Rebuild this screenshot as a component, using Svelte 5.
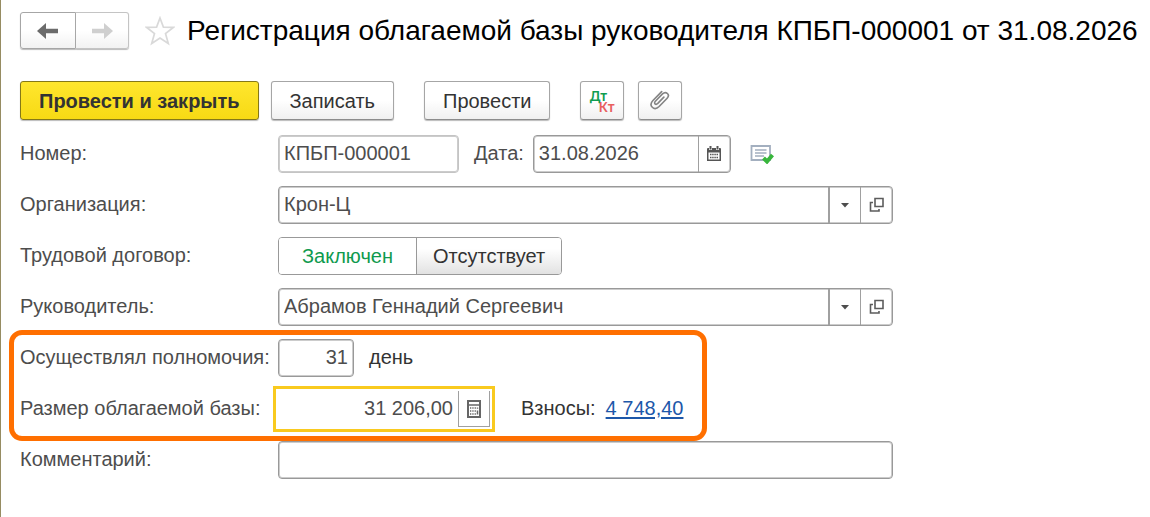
<script lang="ts">
  let number = $state('КПБП-000001');
  let date = $state('31.08.2026');
  let organization = $state('Крон-Ц');
  let contract = $state('yes');
  let manager = $state('Абрамов Геннадий Сергеевич');
  let days = $state('31');
  let base = $state('31 206,00');
  let comment = $state('');
</script>

{#snippet choose()}
  <button type="button" class="cell arrow" aria-label="Выбрать из списка">
    <svg width="10" height="6" viewBox="0 0 10 6"><path d="M1 1h8L5 5.5z" fill="#4d4d4d" /></svg>
  </button>
  <button type="button" class="cell" aria-label="Открыть">
    <svg width="16" height="16" viewBox="0 0 16 16" fill="none" stroke="#5c5c5c" stroke-width="1.6">
      <path d="M6 1.500h8v8H6zM4 5.500H1.500v8.500H10v-2" />
    </svg>
  </button>
{/snippet}

<main>
  <header>
    <nav>
      <button type="button" aria-label="Назад">
        <svg width="22" height="16" viewBox="0 0 22 16"><path d="M0 8l9-8v5.700h12v4.600H9V16z" fill="#6b6b6b" /></svg>
      </button>
      <button type="button" class="off" aria-label="Вперед">
        <svg width="22" height="16" viewBox="0 0 22 16"><path d="M22 8l-9-8v5.700H1v4.600h12V16z" fill="#cfcfcf" /></svg>
      </button>
    </nav>
    <button type="button" class="star" aria-label="В избранное">
      <svg width="30" height="30" viewBox="0 0 30 30">
        <path d="M15 2l3.400 9.100 9.900.3-7.800 6.100 2.800 10L15 22l-8.300 5.500 2.800-10-7.800-6.100 9.900-.3z" fill="none" stroke="#d9d9d9" stroke-width="1.700" />
      </svg>
    </button>
    <h1>Регистрация облагаемой базы руководителя КПБП-000001 от 31.08.2026</h1>
  </header>

  <div class="toolbar">
    <button type="button" class="btn primary">Провести и закрыть</button>
    <button type="button" class="btn save">Записать</button>
    <button type="button" class="btn post">Провести</button>
    <button type="button" class="btn icon postings" aria-label="Проводки"><span class="dt">Дт</span><span class="kt">Кт</span></button>
    <button type="button" class="btn icon" aria-label="Файлы">
      <svg width="22" height="22" viewBox="0 0 20 20" fill="none" stroke="#858585" stroke-width="1.500" stroke-linecap="round">
        <path d="M13.500 6.500l-5.500 5.700c-2 1.900-4-.2-2.200-2l6.500-6.700c3.200-3 7.200.8 4.200 4l-7.300 7.500c-4.600 4.500-10-.8-5.600-5.500L11.500 1.500" />
      </svg>
    </button>
  </div>

  <form>
    <div class="row">
      <label for="number">Номер:</label>
      <div class="field pale number"><input id="number" bind:value={number} /></div>
      <label for="date" class="inner">Дата:</label>
      <div class="field date">
        <input id="date" bind:value={date} />
        <button type="button" class="cell" aria-label="Календарь">
          <svg width="16" height="16" viewBox="0 0 16 16">
            <path d="M1 3q0-1 1-1h12q1 0 1 1v12H1z" fill="#555" />
            <path d="M2.500 6.500h11v7h-11z" fill="#fff" />
            <path d="M4.500 0v4M11.500 0v4" stroke="#fff" stroke-width="3" />
            <path d="M4.500 0v3.500M11.500 0v3.500" stroke="#555" stroke-width="2" />
            <path d="M4 8.500h8M4 11.500h8" stroke="#555" stroke-width="1.500" stroke-dasharray="1.500 .67" />
          </svg>
        </button>
      </div>
      <button type="button" class="status" aria-label="Документ проведен">
        <svg width="24" height="20" viewBox="0 0 24 20">
          <path d="M1.500 2h18.500v14H1.500z" fill="#fff" stroke="#a3afbf" stroke-width="1.800" />
          <path d="M5 6h11.500M5 9h11.500M5 12h9" stroke="#a3afbf" stroke-width="1.500" />
          <path d="M13.500 14l3.500 3.500 5.500-6.500" fill="none" stroke="#38b63c" stroke-width="4" />
        </svg>
      </button>
    </div>

    <div class="row">
      <label for="organization">Организация:</label>
      <div class="field wide"><input id="organization" bind:value={organization} />{@render choose()}</div>
    </div>

    <div class="row" role="radiogroup" aria-labelledby="contract">
      <span class="caption" id="contract">Трудовой договор:</span>
      <div class="switch">
        <label><input type="radio" name="contract" value="yes" bind:group={contract} /><span>Заключен</span></label>
        <label><input type="radio" name="contract" value="no" bind:group={contract} /><span>Отсутствует</span></label>
      </div>
    </div>

    <div class="row">
      <label for="manager">Руководитель:</label>
      <div class="field wide"><input id="manager" bind:value={manager} />{@render choose()}</div>
    </div>

    <section>
      <div class="row">
        <label for="days">Осуществлял полномочия:</label>
        <div class="field days"><input id="days" bind:value={days} /></div>
        <span class="unit">день</span>
      </div>
      <div class="row">
        <label for="base">Размер облагаемой базы:</label>
        <div class="field base">
          <input id="base" bind:value={base} />
          <button type="button" class="cell" aria-label="Калькулятор">
            <svg width="16" height="18" viewBox="0 0 16 18">
              <path d="M2 1h12v16H2z" fill="#fff" stroke="#666" stroke-width="2" />
              <path d="M2 5h12" stroke="#666" stroke-width="1.500" />
              <path d="M4 8h6M4 11h6M4 14h6" stroke="#666" stroke-width="1.300" stroke-dasharray="1.300 1" />
              <path d="M11.500 7.500v1.300M11.500 10.500v4" stroke="#666" stroke-width="1.500" />
            </svg>
          </button>
        </div>
        <span class="fees">Взносы:</span>
        <a href="#fees">4 748,40</a>
      </div>
    </section>

    <div class="row">
      <label for="comment">Комментарий:</label>
      <div class="field wide"><input id="comment" bind:value={comment} /></div>
    </div>
  </form>
</main>

<style>
  :global(body) { margin: 0; background: #fff; }
  main {
    box-sizing: border-box;
    min-height: 100vh;
    padding: 12px 12px 24px 19px;
    border-left: 1px solid #968c62;
    font: 20px/24px "Liberation Sans", Arial, sans-serif;
    color: #4d4d4d;
  }
  button, input { font: inherit; color: inherit; }
  button { box-sizing: border-box; padding: 0; cursor: pointer; }
  svg { display: block; flex: none; }

  header { display: flex; align-items: center; }
  nav { display: flex; }
  nav button {
    display: flex;
    align-items: center;
    justify-content: center;
    width: 56px;
    height: 37px;
    border: 1px solid #a6a6a6;
    border-radius: 3px 0 0 3px;
    background: linear-gradient(#fff 50%, #f2f2f2);
    box-shadow: 0 1px 1px #bbb;
  }
  nav .off { width: 53px; border-color: #c4c4c4; border-left: 0; border-radius: 0 3px 3px 0; }
  .star { margin-left: 16px; border: 0; background: none; }
  h1 { margin: 0 0 0 12px; font-size: 28px; line-height: 36px; font-weight: 400; color: #000; white-space: nowrap; }

  .toolbar { display: flex; margin-top: 32px; }
  .btn {
    display: flex;
    align-items: center;
    justify-content: center;
    height: 39px;
    padding: 0 18px;
    border: 1px solid #a6a6a6;
    border-bottom-color: #8c8c8c;
    border-radius: 3px;
    background: linear-gradient(#fff 50%, #f0f0f0);
    box-shadow: 0 1px 1px #bbb;
    color: #333;
    white-space: nowrap;
  }
  .primary { border-color: #857817; background: linear-gradient(#ffe62e, #f7da14); font-weight: 700; }
  .save { margin-left: 12px; }
  .post { margin: 0 30px; }
  .icon { width: 44px; padding: 0; }
  .icon + .icon { margin-left: 14px; }
  .postings { flex-direction: column; font: 600 14px/11px "Noto Sans", sans-serif; }
  .dt { margin-right: 8px; color: #0f9d50; }
  .kt { margin-left: 8px; color: #e8605f; }

  form { margin-top: 15px; }
  .row { display: flex; align-items: center; height: 38px; margin-bottom: 13px; }
  .row > label:first-child, .caption { flex: none; width: 258px; padding-bottom: 2px; box-sizing: border-box; white-space: nowrap; }
  .field {
    display: flex;
    box-sizing: border-box;
    height: 38px;
    border: 1px solid #999;
    border-radius: 4px;
    background: #fff;
    box-shadow: inset 0 0 0 1px #ccc;
    overflow: hidden;
  }
  .field input { flex: 1; min-width: 0; padding: 0 5px 2px; border: 0; outline: 0; background: none; }
  .cell {
    display: flex;
    align-items: center;
    justify-content: center;
    flex: none;
    width: 32px;
    border: 0;
    border-left: 1px solid #a0a0a0;
    background: none;
  }
  .arrow { border-left-width: 2px; }
  .pale { border-color: #c4c4c4; }
  .number { width: 181px; }
  .inner { margin: 0 9px 0 15px; padding-bottom: 2px; }
  .date { width: 198px; }
  .status { margin-left: 19px; border: 0; background: none; }
  .wide { flex: 0 1 615px; }

  .switch {
    display: flex;
    box-sizing: border-box;
    height: 38px;
    border: 1px solid #999;
    border-radius: 4px;
    overflow: hidden;
    line-height: 36px;
    color: #333;
  }
  .switch label { position: relative; display: block; }
  .switch input { position: absolute; inset: 0; margin: 0; opacity: 0; }
  .switch span { display: block; padding: 0 16px; background: linear-gradient(#fff 30%, #e2e2e2); }
  .switch label:first-child span { padding: 0 23px; border-right: 1px solid #999; }
  .switch input:checked + span { background: #fff; color: #0f9a4e; }

  section {
    box-sizing: border-box;
    width: 698px;
    margin: -9px 0 0 -11px;
    padding: 4px 0 8px 6px;
    border: 5px solid #ff6f00;
    border-radius: 13px;
  }
  section .row:last-child { margin-bottom: 0; }
  .days { width: 76px; }
  .days input, .base input { text-align: right; }
  .unit { margin-left: 15px; padding-bottom: 2px; color: #333; }
  .base {
    width: 222px;
    height: 46px;
    margin: 0 0 0 -5px;
    padding: 2px;
    border: 3px solid #f9ca1f;
    border-radius: 0;
    box-shadow: none;
  }
  .base .cell { border-right: 1px solid #a0a0a0; border-bottom: 1px solid #a0a0a0; }
  .fees { margin: 0 10px 0 26px; padding-bottom: 2px; color: #333; }
  a { padding-bottom: 2px; color: #1d57a9; text-decoration-thickness: 2px; text-underline-offset: 2px; }
</style>
